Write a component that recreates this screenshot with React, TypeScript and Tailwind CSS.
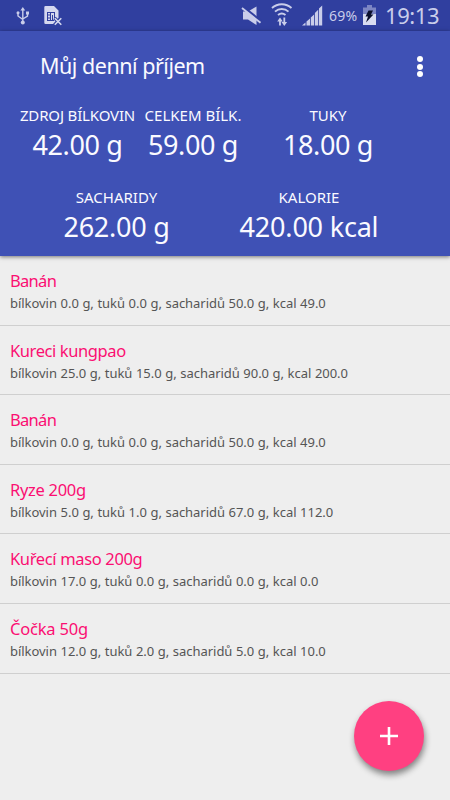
import React from "react";

type Stat = { label: string; value: string; width: string; labelTracking: string; valueTracking: string };

const topStats: Stat[] = [
  { label: "ZDROJ BÍLKOVIN", value: "42.00 g", width: "w-[115px]", labelTracking: "tracking-[-0.15px]", valueTracking: "tracking-[-0.35px]" },
  { label: "CELKEM BÍLK.", value: "59.00 g", width: "w-[116px]", labelTracking: "tracking-[0px]", valueTracking: "tracking-[-0.35px]" },
  { label: "TUKY", value: "18.00 g", width: "w-[154px]", labelTracking: "tracking-[0px]", valueTracking: "tracking-[-0.35px]" },
];

const bottomStats: Stat[] = [
  { label: "SACHARIDY", value: "262.00 g", width: "w-[193px]", labelTracking: "tracking-[0px]", valueTracking: "tracking-[-0.25px]" },
  { label: "KALORIE", value: "420.00 kcal", width: "w-[192px]", labelTracking: "tracking-[0px]", valueTracking: "tracking-[-0.2px]" },
];

const meals = [
  { name: "Banán", tracking: "tracking-[-0.7px]", detail: "bílkovin 0.0 g, tuků 0.0 g, sacharidů 50.0 g, kcal 49.0" },
  { name: "Kureci kungpao", tracking: "tracking-[-0.4px]", detail: "bílkovin 25.0 g, tuků 15.0 g, sacharidů 90.0 g, kcal 200.0" },
  { name: "Banán", tracking: "tracking-[-0.7px]", detail: "bílkovin 0.0 g, tuků 0.0 g, sacharidů 50.0 g, kcal 49.0" },
  { name: "Ryze 200g", tracking: "tracking-[-0.3px]", detail: "bílkovin 5.0 g, tuků 1.0 g, sacharidů 67.0 g, kcal 112.0" },
  { name: "Kuřecí maso 200g", tracking: "tracking-[-0.35px]", detail: "bílkovin 17.0 g, tuků 0.0 g, sacharidů 0.0 g, kcal 0.0" },
  { name: "Čočka 50g", tracking: "tracking-[-0.2px]", detail: "bílkovin 12.0 g, tuků 2.0 g, sacharidů 5.0 g, kcal 10.0" },
];

function StatCell({ s }: { s: Stat }) {
  return (
    <div className={`flex flex-col items-center whitespace-nowrap ${s.width}`}>
      <span className={`text-[15px] leading-[20px] ${s.labelTracking}`}>{s.label}</span>
      <span className={`mt-px text-[27px] leading-[38px] ${s.valueTracking}`}>{s.value}</span>
    </div>
  );
}

function StatusBar() {
  return (
    <div className="flex h-[31px] items-center bg-[#303f9f] text-[#c9cdea]">
      <svg className="ml-[16px] h-[31px] w-[14px]" viewBox="16 0 14 31" fill="none" stroke="currentColor" strokeWidth="1.4">
        <path d="M22.8 9v13M18 13v3l4.8 3.500M27.500 13v3l-4.700 3" />
        <path d="M22.800 7l2.400 3.500h-4.800z" fill="currentColor" stroke="none" />
        <circle cx="22.800" cy="22.500" r="2" fill="currentColor" stroke="none" />
        <circle cx="18" cy="12.800" r="1.500" fill="currentColor" stroke="none" />
        <path d="M26 11.500h3v3h-3z" fill="currentColor" stroke="none" />
      </svg>
      <svg className="ml-[14px] h-[31px] w-[19px]" viewBox="44 0 19 31" fill="none">
        <path d="M45.500 6h8.500l4.500 4.500V18l-5 6h-8a1.200 1.200 0 0 1-1.200-1.200V7.200A1.200 1.200 0 0 1 45.500 6z" fill="#d5d8ef" />
        <path d="M47 12.500h8M47.500 12v9M47.500 15h2.500M47.500 18h2.500M47.500 20.500h6.500M50.500 13v7M54.500 13v6M52.500 15v5" stroke="#303f9f" strokeWidth="1" />
        <path d="M54.500 18l7 7M61.500 18l-7 7" stroke="#303f9f" strokeWidth="3.500" />
        <path d="M54.800 18.300l6.500 6.500M61.300 18.300l-6.500 6.500" stroke="#d5d8ef" strokeWidth="1.600" />
      </svg>
      <svg className="ml-[178px] h-[31px] w-[21px]" viewBox="240 0 21 31">
        <path d="M242 11.500h5l8.500-5v18.500L247 19.500h-5z" fill="currentColor" />
        <path d="M241 6l20 16" stroke="#303f9f" strokeWidth="2.500" />
        <path d="M241 8l18.500 14.800" stroke="currentColor" strokeWidth="1.900" />
      </svg>
      <svg className="ml-[9px] h-[31px] w-[22px]" viewBox="271 0 22 31" fill="none" stroke="currentColor" strokeWidth="1.900">
        <path d="M272 8a14.500 14.500 0 0 1 19.500 0M275 11.600a10 10 0 0 1 13.500 0M278 15a6 6 0 0 1 7.500 0" />
        <path d="M280 25.500v-5.500M284.300 17.500v5.500" strokeWidth="1.800" />
        <path d="M277.200 21.500l2.800-4 2.800 4zM281.500 22l2.800 4 2.800-4z" fill="currentColor" stroke="none" />
      </svg>
      <svg className="ml-[9px] h-[31px] w-[21px]" viewBox="302 0 21 31" fill="currentColor">
        <path d="M302 25.500l3.500-3v3zM306.500 21.500l3.500-3v7h-3.500zM310.800 17.500l3.300-3v11h-3.300zM314.900 13l3.300-3.200v15.700h-3.300zM319 8.500l3.200-3v20H319z" />
      </svg>
      <span className="ml-[6px] w-[31px] whitespace-nowrap text-[14px] tracking-[0.2px]">69%</span>
      <svg className="ml-[3px] h-[31px] w-[13px]" viewBox="363 0 13 31">
        <path d="M367 5h5v2.500h4V15h-13V7.500h4z" fill="#7d86c4" />
        <path d="M363 14h13v11h-13z" fill="#d9dcf1" />
        <path d="M368.500 10.500h4.500l-2 4h2.500l-7.500 8 2-6h-2.500z" fill="#0b0f2c" />
      </svg>
      <span className="ml-[9px] whitespace-nowrap text-[22px] leading-[31px] tracking-[-0.4px]">19:13</span>
    </div>
  );
}

export default function App() {
  return (
    <div className="relative flex h-[800px] w-[450px] flex-col overflow-hidden bg-[#eeeeee] font-['Noto_Sans',sans-serif]">
      <StatusBar />
      <header className="relative h-[225px] shrink-0 bg-[#3f51b5] text-[#fafaff] shadow-[0_1px_4px_rgba(0,0,0,0.5)]">
        <div className="flex h-[74px] items-start justify-between pr-[27px] pl-[40px]">
          <h1 className="mt-[20px] text-[21.500px] leading-[30px] tracking-[-0.480px]">Můj denní příjem</h1>
          <div className="mt-[25px] flex flex-col gap-[1.500px]">
            <i className="size-[6px] rounded-full bg-white" />
            <i className="size-[6px] rounded-full bg-white" />
            <i className="size-[6px] rounded-full bg-white" />
          </div>
        </div>
        <div className="ml-[20px] flex">
          {topStats.map((s) => <StatCell key={s.label} s={s} />)}
        </div>
        <div className="mt-[23px] ml-[20px] flex">
          {bottomStats.map((s) => <StatCell key={s.label} s={s} />)}
        </div>
      </header>
      <ul>
        {meals.map((m, i) => (
          <li key={i} className="h-[69.600px] border-b border-[#cfcfcf] pt-[13px] pl-[10px] whitespace-nowrap">
            <div className={`text-[16.500px] leading-[24px] text-[#fb0f72] ${m.tracking}`}>{m.name}</div>
            <div className="text-[13px] leading-[20px] tracking-[-0.040px] text-[#555555] [word-spacing:0.280px]">{m.detail}</div>
          </li>
        ))}
      </ul>
      <button className="absolute top-[701px] left-[354px] flex size-[70px] items-center justify-center rounded-full bg-[#ff4081] shadow-[1px_4px_6px_rgba(0,0,0,0.45)]">
        <svg className="size-[18px]" viewBox="0 0 18 18" stroke="white" strokeWidth="2.600"><path d="M9 0v18M0 9h18" /></svg>
      </button>
    </div>
  );
}
